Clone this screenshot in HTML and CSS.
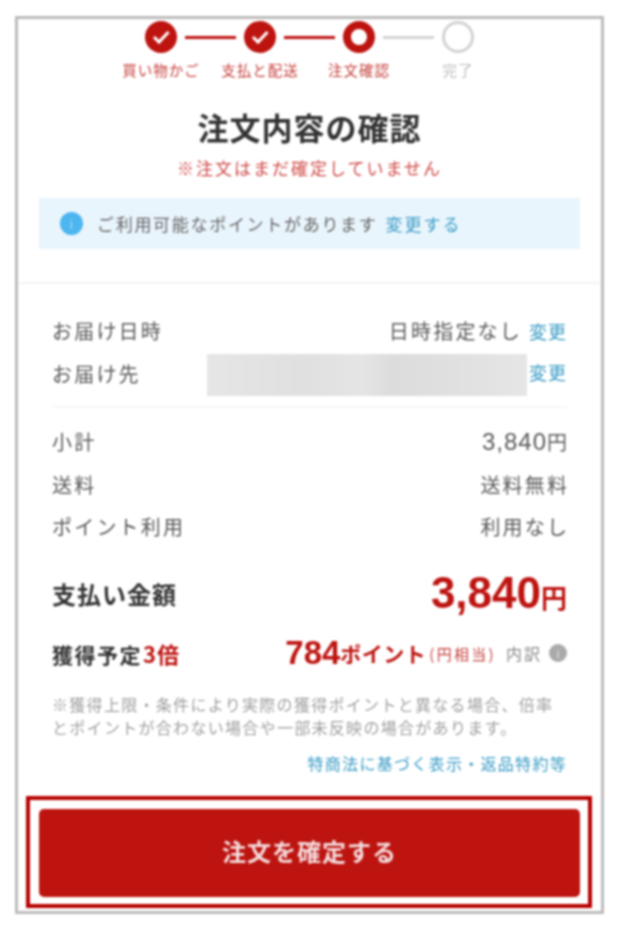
FILE: index.html
```html
<!DOCTYPE html>
<html lang="ja">
<head>
<meta charset="utf-8">
<title>注文内容の確認</title>
<link rel="stylesheet" href="styles.css">
</head>
<body>
<main class="frame">
  <div class="track">
    <span class="dot done"><svg viewBox="0 0 32 32" width="32" height="32"><path d="M9 16l5 5 9.500-10" fill="none" stroke="#fff" stroke-width="3"/></svg></span>
    <span class="line on"></span>
    <span class="dot done"><svg viewBox="0 0 32 32" width="32" height="32"><path d="M9 16l5 5 9.500-10" fill="none" stroke="#fff" stroke-width="3"/></svg></span>
    <span class="line on"></span>
    <span class="dot current"></span>
    <span class="line"></span>
    <span class="dot todo"></span>
  </div>
  <div class="labels">
    <span class="label on">買い物かご</span>
    <span class="label on">支払と配送</span>
    <span class="label on">注文確認</span>
    <span class="label">完了</span>
  </div>
  <h1 class="title">注文内容の確認</h1>
  <p class="warn">※注文はまだ確定していません</p>
  <div class="band">
    <span class="info">i</span>
    <span class="band-text">ご利用可能なポイントがあります</span>
    <a class="band-link">変更する</a>
  </div>
  <div class="rule-wide"></div>
  <section class="details">
    <div class="row tall"><span>お届け日時</span><span class="right"><span class="when">日時指定なし</span><a class="change">変更</a></span></div>
    <div class="row tall"><span>お届け先</span><span class="right"><span class="redacted"></span><a class="change change-high">変更</a></span></div>
    <div class="rule"></div>
    <div class="price-rows">
      <div class="row"><span>小計</span><span class="money"><span class="money-num">3,840</span>円</span></div>
      <div class="row"><span>送料</span><span class="plain">送料無料</span></div>
      <div class="row"><span>ポイント利用</span><span class="plain">利用なし</span></div>
    </div>
    <div class="total">
      <span class="total-label">支払い金額</span>
      <span class="total-value"><span class="amount">3,840</span><span class="yen">円</span></span>
    </div>
    <div class="points">
      <span class="points-label">獲得予定<span class="red">3倍</span></span>
      <span class="points-right">
        <span class="pt-num">784</span><span class="pt-unit">ポイント</span><span class="pt-eq">(円相当)</span>
        <span class="pt-break">内訳</span><span class="pt-icon">i</span>
      </span>
    </div>
    <p class="fine">※獲得上限・条件により実際の獲得ポイントと異なる場合、倍率とポイントが合わない場合や一部未反映の場合があります。</p>
    <p class="legal"><a>特商法に基づく表示・返品特約等</a></p>
  </section>
  <div class="callout">
    <button class="confirm" type="button">注文を確定する</button>
  </div>
</main>
</body>
</html>
```

FILE: styles.css
```css
* { box-sizing: border-box; }
html, body { margin: 0; padding: 0; background: #fff; }
body {
  width: 620px;
  height: 928px;
  overflow: hidden;
  font-family: "Noto Sans CJK JP", "Noto Sans", sans-serif;
  color: #555;
}
p, h1 { margin: 0; }

.frame {
  width: 589px;
  height: 898px;
  margin: 16px 0 0 15px;
  border: 3px solid #bcbcbc;
  background: #fff;
  filter: blur(1px);
}

.track {
  display: flex;
  justify-content: center;
  align-items: center;
  margin-top: 2px;
  height: 32px;
}
.dot {
  width: 32px;
  height: 32px;
  border-radius: 50%;
  flex: none;
}
.dot svg { display: block; }
.done { background: #bd1410; }
.current { border: 8px solid #bd1410; background: #fff; }
.todo { border: 3px solid #d2d2d2; background: #fff; }
.line { width: 51px; height: 3px; margin: 0 8px; background: #d4d4d4; }
.line.on { background: #bd1410; }

.labels {
  display: flex;
  justify-content: center;
  height: 18px;
  margin-top: 8px;
}
.label {
  width: 99px;
  text-align: center;
  font-size: 14.5px;
  line-height: 18px;
  letter-spacing: 1px;
  white-space: nowrap;
  color: #bbb;
}
.label.on { color: #c5403c; }

.title {
  height: 40px;
  margin-top: 30px;
  text-align: center;
  font-size: 31px;
  line-height: 36px;
  font-weight: 700;
  letter-spacing: 1px;
  color: #333;
}
.warn {
  height: 24px;
  margin-top: 8px;
  text-align: center;
  font-size: 17px;
  line-height: 22px;
  letter-spacing: 2px;
  color: #cf4a47;
}

.band {
  display: flex;
  align-items: center;
  height: 51px;
  margin: 17px 21px 0;
  padding-left: 21px;
  background: #e9f5fc;
  font-size: 17px;
  letter-spacing: 1.7px;
}
.info {
  width: 23px;
  height: 23px;
  margin-right: 14px;
  border-radius: 50%;
  background: #4db5f0;
  color: #a8dcf8;
  font-size: 12px;
  line-height: 23px;
  text-align: center;
  letter-spacing: 0;
}
.band-text { color: #666; }
.band-link { margin-left: 8px; letter-spacing: 2px; color: #3a9cc6; }

.rule-wide { height: 2px; margin-top: 33px; background: #f3f3f3; }

.details { padding: 0 34px; }
.row {
  display: flex;
  justify-content: space-between;
  align-items: center;
  height: 42.5px;
  padding-bottom: 3px;
  font-size: 20px;
  letter-spacing: 2.2px;
  color: #5a5a5a;
}
.plain { margin-right: -2.2px; }
.tall { height: 43px; padding-bottom: 2px; }
.details > .tall:first-child { margin-top: 26px; }
.right { display: flex; align-items: center; }
.when { margin-right: 5px; }
.redacted {
  display: block;
  width: 320px;
  height: 42px;
  margin-top: 2px;
  background: linear-gradient(90deg, #e6e6e6, #e0e0e0 30%, #e5e5e5 48%, #dcdcdc 58%, #e2e2e2 85%, #e6e6e6);
}
.change {
  width: 40px;
  text-align: right;
  font-size: 18px;
  letter-spacing: 1px;
  color: #3a9cc6;
}
.change-high { margin-bottom: 3px; }
.rule { height: 2px; margin-top: 10px; background: #f7f7f7; }
.price-rows { margin-top: 14px; }
.money { display: flex; align-items: center; letter-spacing: 0; }
.money-num {
  font-family: "Liberation Sans", sans-serif;
  font-size: 24px;
  letter-spacing: 1px;
}

.total {
  display: flex;
  justify-content: space-between;
  align-items: center;
  height: 60px;
  margin-top: 14.5px;
  padding-bottom: 2px;
}
.total-label {
  font-size: 24px;
  font-weight: 700;
  letter-spacing: 1px;
  color: #333;
}
.total-value { display: flex; align-items: baseline; color: #bd1410; font-weight: 700; }
.amount {
  font-family: "Liberation Sans", sans-serif;
  font-size: 44px;
  line-height: 58px;
}
.yen { font-size: 26px; }

.points {
  display: flex;
  justify-content: space-between;
  align-items: center;
  height: 40px;
  margin-top: 10px;
  padding-bottom: 2px;
}
.points-label {
  font-size: 21px;
  font-weight: 700;
  letter-spacing: 1.5px;
  color: #333;
  white-space: pre;
}
.red { margin-left: 1px; font-size: 22px; letter-spacing: 1px; color: #bd1410; }
.points-right { display: flex; align-items: center; }
.pt-num {
  font-family: "Liberation Sans", sans-serif;
  font-size: 33px;
  font-weight: 700;
  color: #bd1410;
}
.pt-unit { font-size: 21px; font-weight: 700; letter-spacing: 0.5px; color: #bd1410; }
.pt-eq { margin-left: 3px; font-size: 15px; letter-spacing: 2.3px; color: #c5403c; }
.pt-break { margin-left: 10px; font-size: 16px; letter-spacing: 2px; color: #8a8a8a; }
.pt-icon {
  width: 18px;
  height: 18px;
  margin-left: 7px;
  border-radius: 50%;
  background: #aaa;
  color: #e4e4e4;
  font-size: 11px;
  line-height: 18px;
  text-align: center;
}

.fine {
  margin-top: 18.5px;
  font-size: 16px;
  line-height: 23px;
  letter-spacing: 1.3px;
  color: #a0a0a0;
}
.legal {
  height: 24px;
  margin-top: 12.5px;
  text-align: right;
  font-size: 16px;
  line-height: 24px;
  letter-spacing: 1.3px;
  white-space: nowrap;
  color: #3a9cc6;
}

.callout {
  width: 566px;
  height: 112px;
  margin: 21px 0 0 8px;
  padding: 9px 8px 7px 9px;
  border: 4px solid #b80000;
}
.confirm {
  display: block;
  width: 100%;
  height: 100%;
  padding: 0 0 5px;
  border: 0;
  border-radius: 5px;
  background: #bd1410;
  color: #f4dcdc;
  font-family: inherit;
  font-size: 24px;
  font-weight: 700;
  letter-spacing: 1px;
}
```
